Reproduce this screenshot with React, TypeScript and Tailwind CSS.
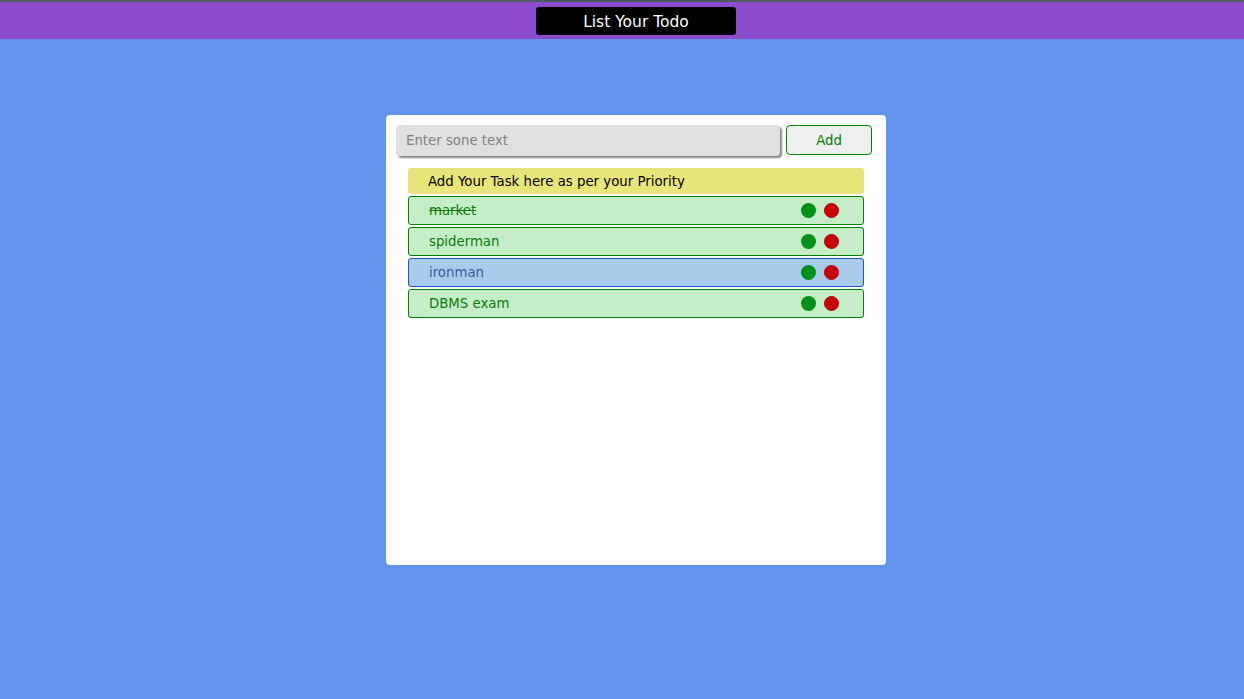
import React from "react";

const items = [
  { text: "market", done: true, blue: false },
  { text: "spiderman", done: false, blue: false },
  { text: "ironman", done: false, blue: true },
  { text: "DBMS exam", done: false, blue: false },
];

export default function App() {
  return (
    <div
      className="min-h-[699px] bg-[#6495ed] flex flex-col"
      style={{ fontFamily: '"DejaVu Sans", Verdana, sans-serif' }}
    >
      <div className="h-[39px] bg-[#8b4bcc] border-t-2 border-[#4b5a5c] flex justify-center items-start pt-[5px] pl-[28px]">
        <div className="w-[200px] h-[28px] bg-black rounded-[3px] text-white text-[15.5px] flex items-center justify-center pt-[3px]">
          List Your Todo
        </div>
      </div>
      <div className="flex justify-center pt-[76px] pl-[28px]">
        <div className="w-[500px] h-[450px] bg-white rounded-[4px] p-[10px]">
          <div className="flex gap-[6px]">
            <input
              placeholder="Enter sone text"
              className="w-[384px] h-[31px] bg-[#e0e0e0] rounded-[4px] px-[10px] text-[13.3px] placeholder:text-[#808080] outline-none shadow-[2px_2px_2px_#888]"
            />
            <button className="w-[86px] h-[30px] bg-[#efefef] border border-[#008000] rounded-[4px] text-[#008000] text-[13.3px] pt-[1px]">
              Add
            </button>
          </div>
          <div className="mx-[12px] mt-[12px] flex flex-col gap-[2px]">
            <div className="h-[26px] bg-[#e8e67a] rounded-[3px] pl-[20px] pt-[1px] flex items-center text-[13.3px] text-black">
              Add Your Task here as per your Priority
            </div>
            {items.map((it) => (
              <div
                key={it.text}
                className={
                  it.blue
                    ? "h-[29px] bg-[#a8cbe9] border border-[#1c55c0] rounded-[3px] pl-[20px] pr-[24px] flex items-center text-[13.3px] text-[#3b5a9e]"
                    : "h-[29px] bg-[#c6eec6] border border-[#008000] rounded-[3px] pl-[20px] pr-[24px] flex items-center text-[13.3px] text-[#0a7a0a]"
                }
              >
                <span className={it.done ? "line-through flex-1 pt-[1px]" : "flex-1 pt-[1px]"}>{it.text}</span>
                <span className="w-[15px] h-[15px] rounded-full bg-[#009119]" />
                <span className="w-[15px] h-[15px] rounded-full bg-[#cc0000] border border-[#a01010] ml-[8px]" />
              </div>
            ))}
          </div>
        </div>
      </div>
    </div>
  );
}
